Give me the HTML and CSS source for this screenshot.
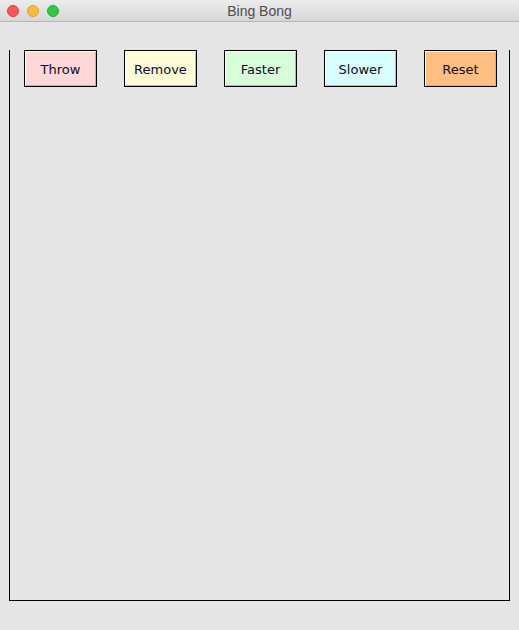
FILE: index.html
```html
<!DOCTYPE html>
<html>
<head>
<meta charset="utf-8">
<title>Bing Bong</title>
<link rel="stylesheet" href="styles.css">
</head>
<body>
<div class="window">
  <div class="titlebar">
    <div class="lights">
      <span class="light red"></span>
      <span class="light yellow"></span>
      <span class="light green"></span>
    </div>
    <div class="title">Bing Bong</div>
  </div>
  <div class="content">
    <div class="canvas">
      <div class="buttons">
        <button class="btn throw">Throw</button>
        <button class="btn remove">Remove</button>
        <button class="btn faster">Faster</button>
        <button class="btn slower">Slower</button>
        <button class="btn reset">Reset</button>
      </div>
    </div>
  </div>
</div>
</body>
</html>
```

FILE: styles.css
```css
html, body {
  margin: 0;
  padding: 0;
  background: #e5e5e5;
}
.window {
  width: 519px;
  height: 630px;
  display: flex;
  flex-direction: column;
  background: #e5e5e5;
}
.titlebar {
  height: 21px;
  border-bottom: 1px solid #b4b4b4;
  background: linear-gradient(#ececec, #d7d7d7);
  position: relative;
  display: flex;
  align-items: center;
  justify-content: center;
  flex-shrink: 0;
}
.lights {
  position: absolute;
  left: 7px;
  top: 5px;
  display: flex;
  gap: 8px;
}
.light {
  width: 12px;
  height: 12px;
  border-radius: 50%;
  box-sizing: border-box;
}
.red { background: #fc5753; border: 1px solid #df3d39; }
.yellow { background: #fdbc40; border: 1px solid #de9f34; }
.green { background: #33c748; border: 1px solid #27aa35; }
.title {
  font-family: "Liberation Sans", Arial, sans-serif;
  font-size: 14px;
  color: #4d4d4d;
  margin-top: 1px;
}
.content {
  padding: 28px 9px 0 9px;
}
.canvas {
  width: 501px;
  border-left: 1px solid #000;
  border-right: 1px solid #000;
  border-bottom: 1px solid #000;
  box-sizing: border-box;
  height: 551px;
}
.buttons {
  display: flex;
  gap: 27px;
  padding-left: 14px;
}
.btn {
  width: 73px;
  height: 37px;
  margin: 0;
  padding: 2px 0 0 0;
  box-sizing: border-box;
  border: 1px solid #000;
  box-shadow: inset 1px 1px 0 #ffffff, inset -1px -1px 0 #b5b5b5;
  font-family: "DejaVu Sans", Verdana, sans-serif;
  font-size: 13px;
  color: #0c0c24;
  line-height: 33px;
}
.throw { background: #ffd7d7; }
.remove { background: #fffcd8; }
.faster { background: #d7ffd7; }
.slower { background: #d7ffff; }
.reset { background: #ffbf80; }
```
